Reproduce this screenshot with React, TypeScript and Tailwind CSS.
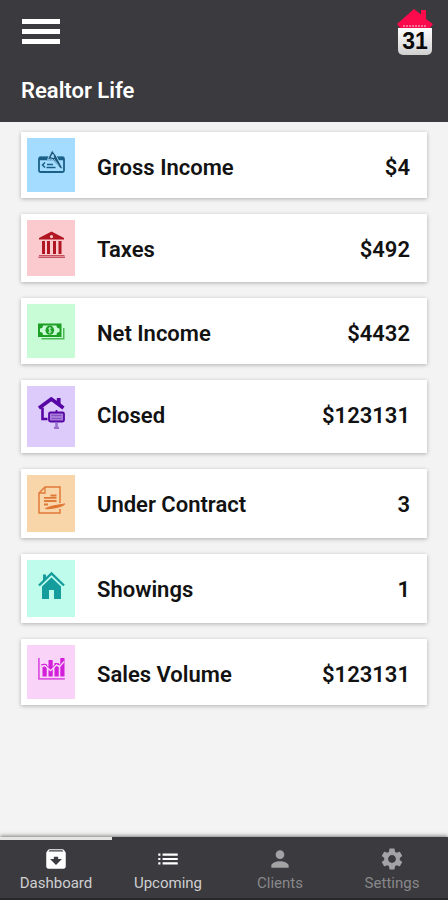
import type { ReactNode } from "react";
import { MdArchive, MdList, MdPerson, MdSettings } from "react-icons/md";

function ChequeIcon() {
  return (
    <svg viewBox="0 0 27 25" className="h-[25px] w-[27px]" fill="none" stroke="#1b6088" aria-hidden="true">
      <rect x="1" y="8.5" width="25" height="14.5" rx="1.5" strokeWidth="1.8" />
      <path d="M1 9.500h25" strokeWidth="3.500" />
      <path d="M7 13.500l-2.500 2.500 2.500 2.500M9 15.500h6M8.500 18.500h9" strokeWidth="1.500" />
      <path d="M9.500 10.500L14 1l4 5.500 6.500 12.500-1.500 1-9-10z" fill="#1b5578" stroke="#a3dcfe" strokeWidth="0.9" />
      <path d="M13 8l1.800-3 1.200 3.500zM16 10l4.500 6.500" fill="#a3dcfe" stroke="#a3dcfe" strokeWidth="0.8" />
    </svg>
  );
}

function BankIcon() {
  return (
    <svg viewBox="0 0 27 27" className="h-[27px] w-[27px]" fill="#b01722" aria-hidden="true">
      <path fillRule="evenodd" d="M13.500 0.500L26 7v1.500H1V7zM13.500 4a1.600 1.600 0 1 0 0 3.200 1.600 1.600 0 0 0 0-3.200z" />
      <path d="M4 10h3v13H4zM9 10h3v13H9zM15 10h3v13h-3zM20.500 10h3v13h-3z" />
      <path d="M1 24h25.500v1H1zM0.500 25.600h26.500V27H0.500z" fill="#c3525d" />
    </svg>
  );
}

function CashIcon() {
  return (
    <svg viewBox="0 -3 27 25" className="h-[25px] w-[27px]" fill="#1d9f25" aria-hidden="true">
      <path fillRule="evenodd" d="M0 5.500h23.500V19H0zM5 7.500A3 3 0 0 1 2 10.500v3.500a3 3 0 0 1 3 3h13.500a3 3 0 0 1 3-3v-3.500a3 3 0 0 1-3-3z" />
      <ellipse cx="11.800" cy="12.200" rx="4.300" ry="4.600" />
      <path d="M13.300 10.300c-2.800-1-3.500 1-1.500 1.800 2.400 0.900 1.500 3.100-1.500 2M11.800 9v6.500" fill="none" stroke="#c8fcd6" strokeWidth="0.9" />
      <path d="M25 10h1.500v11.500H3.500V20H25z" fill="#4cb957" />
    </svg>
  );
}

function HouseSignIcon() {
  return (
    <svg viewBox="0 0 27 32" className="h-[32px] w-[27px]" fill="none" stroke="#5706a6" aria-hidden="true">
      <path d="M1 11L13.300 2 25.500 11" strokeWidth="3.600" />
      <path d="M20.700 1v7" strokeWidth="3.800" />
      <path d="M4.500 10.500V22H9.500" strokeWidth="2.600" />
      <rect x="11" y="15.500" width="15" height="9" rx="1.500" fill="#a77bd8" strokeWidth="1.800" />
      <path d="M13.500 18.500h10M13.500 21.500h10" stroke="#8650c4" strokeWidth="1" />
      <path d="M18.500 13v2.500" strokeWidth="1.800" />
      <path d="M18.500 25.500V31M16 31h5" stroke="#9a70cf" strokeWidth="2.600" />
    </svg>
  );
}

function ContractIcon() {
  return (
    <svg viewBox="0 0 27 28" className="h-[28px] w-[27px]" fill="none" stroke="#e07a38" aria-hidden="true">
      <path d="M22 17V1H7L1 7v20h21v-4" strokeWidth="1.500" />
      <path d="M7 1v6H1" strokeWidth="1.300" />
      <path d="M12.500 9.500h6M6 11.800h12.500M6 15h12.500M6 18.500h4" strokeWidth="1.800" />
      <path d="M8 22.500c6-3.500 12-3 18.500-4.500-3 3-11 4-14.500 4.500-2 .4-3 .3-4 0z" fill="#df6a1c" strokeWidth="1.200" />
    </svg>
  );
}

function HouseIcon() {
  return (
    <svg viewBox="0 0 27 28" className="h-[28px] w-[27px]" aria-hidden="true">
      <path d="M1 14.500L13.500 2.500 26 14.500" fill="none" stroke="#159c9c" strokeWidth="2.400" />
      <path d="M5 3.500h3v4L5 10z" fill="#159c9c" />
      <path d="M4 15.500L13.500 6.500l9.500 9V28h-7V19h-5v9H4z" fill="#159c9c" />
    </svg>
  );
}

function ChartIcon() {
  return (
    <svg viewBox="0 0 27 25" className="h-[25px] w-[27px]" fill="#d21fd8" aria-hidden="true">
      <path d="M0 2h1.800v20h25v1.800H0z" fill="#dc58e2" />
      <path d="M4.500 8h4.200v12.500H4.500zM10.500 4h4.200v16.500h-4.200zM16.500 7h4.200v13.500h-4.200zM22.300 2h4.200v18.500h-4.200z" />
      <path d="M3 10.500l4-1 5.500 5 6-5.500 3 1.500 4.500-5" fill="none" stroke="#f9d3f8" strokeWidth="1.600" />
      <path d="M3 9l4-1 5.500 5 6-5.500 3 1.500 4.500-5" fill="none" stroke="#d21fd8" strokeWidth="1" />
    </svg>
  );
}

function CalendarHouse() {
  return (
    <span className="flex w-[36px] flex-col items-center">
      <svg viewBox="0 0 36 20" className="block h-[20px] w-[36px]" aria-hidden="true">
        <path d="M0 16L17 1l7 5.500V2h5v9l7 5-3 4H3z" fill="#fb0b4b" />
        <path d="M6 18h24" stroke="#ff8fae" strokeWidth="1.500" strokeDasharray="2 1" />
      </svg>
      <span className="flex h-[27px] w-[34px] items-center justify-center rounded-b-[5px] bg-linear-to-b from-white to-[#d0d0d0] font-['Liberation_Sans',sans-serif] text-[23px] leading-[27px] font-bold text-[#0a0a0a]">
        31
      </span>
    </span>
  );
}

type Stat = { label: string; value: string; tile: string; icon: ReactNode };

const stats: Stat[] = [
  { label: "Gross Income", value: "$4", tile: "bg-[#a3dcfe]", icon: <ChequeIcon /> },
  { label: "Taxes", value: "$492", tile: "bg-[#fbcace]", icon: <BankIcon /> },
  { label: "Net Income", value: "$4432", tile: "bg-[#c8fcd6]", icon: <CashIcon /> },
  { label: "Closed", value: "$123131", tile: "bg-[#dccbfb]", icon: <HouseSignIcon /> },
  { label: "Under Contract", value: "3", tile: "bg-[#f9d6aa]", icon: <ContractIcon /> },
  { label: "Showings", value: "1", tile: "bg-[#bffcec]", icon: <HouseIcon /> },
  { label: "Sales Volume", value: "$123131", tile: "bg-[#f9d3f8]", icon: <ChartIcon /> },
];

const tabs = [
  { label: "Dashboard", Icon: MdArchive, tone: "text-white", text: "text-[#cfcfd1]", bar: "border-[#e4e4e2]" },
  { label: "Upcoming", Icon: MdList, tone: "text-white", text: "text-[#cfcfd1]", bar: "border-transparent" },
  { label: "Clients", Icon: MdPerson, tone: "text-[#a3a3a5]", text: "text-[#88888b]", bar: "border-transparent" },
  { label: "Settings", Icon: MdSettings, tone: "text-[#a3a3a5]", text: "text-[#88888b]", bar: "border-transparent" },
];

export default function App() {
  return (
    <div className="flex min-h-screen flex-col bg-[#f3f3f3] font-[Roboto,sans-serif]">
      <header className="bg-[#3b3a3e] px-[21px] pb-4 text-white">
        <div className="flex items-start justify-between pt-2">
          <button type="button" aria-label="Open menu" className="mt-[11px] flex w-[40px] flex-col gap-[5px] px-px">
            <span className="h-[5px] bg-white" />
            <span className="h-[5px] bg-white" />
            <span className="h-[5px] bg-white" />
          </button>
          <button type="button" aria-label="Open calendar" className="-mr-[6px]">
            <CalendarHouse />
          </button>
        </div>
        <h1 className="mt-[21px] text-[22px] leading-[30px] font-semibold">Realtor Life</h1>
      </header>

      <main className="flex-1 px-[21px] pt-[10px] pb-4">
        <ul className="flex flex-col gap-4">
          {stats.map((s) => (
            <li
              key={s.label}
              className="flex items-start bg-white p-[6px] pr-[17px] shadow-[0_1px_4px_rgba(0,0,0,0.28)]"
            >
              <span className={`flex w-12 shrink-0 justify-center pt-[11px] pb-[18px] ${s.tile}`}>{s.icon}</span>
              <span className="mt-4 ml-[22px] flex-1 text-[22px] leading-[28px] font-semibold text-[#121212]">
                {s.label}
              </span>
              <span className="mt-4 text-[22px] leading-[28px] font-semibold text-[#121212]">{s.value}</span>
            </li>
          ))}
        </ul>
      </main>

      <nav className="sticky bottom-0 flex border-b-2 border-[#28272a] bg-[#3b3a3e] shadow-[0_-1px_4px_rgba(0,0,0,0.5)]">
        {tabs.map(({ label, Icon, tone, text, bar }) => (
          <a key={label} href="#" className={`flex flex-1 flex-col items-center border-t-3 pt-[6px] pb-1 ${bar}`}>
            <Icon className={`size-[26px] ${tone}`} aria-hidden="true" />
            <span className={`text-[15px] leading-[22px] font-normal ${text}`}>{label}</span>
          </a>
        ))}
      </nav>
    </div>
  );
}
